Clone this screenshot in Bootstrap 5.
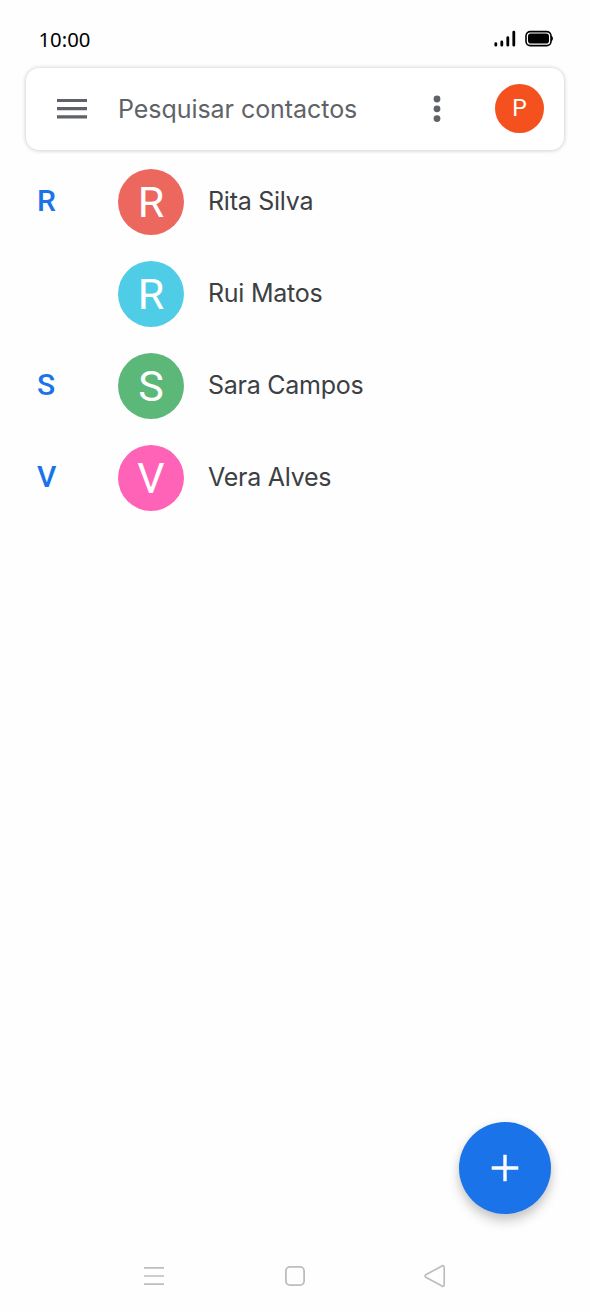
<!DOCTYPE html>
<html lang="pt">
<head>
<meta charset="utf-8">
<meta name="viewport" content="width=device-width, initial-scale=1">
<title>Contactos</title>
<link href="https://cdn.jsdelivr.net/npm/bootstrap@5.3.0/dist/css/bootstrap.min.css" rel="stylesheet">
<style>
body{background:#fefefe;font-family:Inter,Roboto,sans-serif;color:#3c4043;overflow:hidden}
.phone{height:1312px}
.status{height:68px;padding:10px 37.5px 0 38.5px;font:20.3px/24px "Noto Sans",sans-serif;color:#000}
.search-box{height:82px;margin:0 26px 6px;border-radius:13px;background:#fff;box-shadow:0 0 4px rgba(60,64,67,.24),0 1px 4px rgba(60,64,67,.08);padding:0 20px 1px 31px}
.search-box>*{flex-shrink:0}
.query{width:315px;margin-left:31px;font-size:25px;letter-spacing:-.05px;color:#5f6368;line-height:32px}
.account{width:49px;height:49px;background:#f4511e;color:#fff;font:23px/49px Roboto,sans-serif;margin-left:54px}
.contact{height:92px;padding-left:37px}
.section-key{width:81px;font-size:30px;font-weight:500;font-family:Roboto,sans-serif;color:#1a73e8;line-height:32px;padding-bottom:3px}
.avatar{width:66px;height:66px;color:#fff;font:43px/67px Roboto,sans-serif}
.person{margin-left:24px;font-size:25px;line-height:32px;padding-bottom:2px;letter-spacing:-.25px}
.fab{width:92px;height:92px;background:#1a73e8;margin:0 39px 22px 0;box-shadow:0 7px 12px rgba(0,0,0,.2),0 1px 8px rgba(0,0,0,.06)}
.system-nav{height:76px;padding:4px 144px 0 143px}
</style>
</head>
<body>
<div class="phone d-flex flex-column">
<header class="status d-flex align-items-center justify-content-between">
<span>10:00</span>
<svg width="62" height="20" viewBox="0 0 62 20" aria-hidden="true" class="mb-1"><path d="M4.8 16.6v1.6M10.8 14.9v3.3M16.8 10.6v7.6M22.8 5.1v13.1" stroke="#000" stroke-width="2.8" stroke-linecap="round"/><rect x="35" y="4.6" width="25" height="14" rx="4.3" fill="none" stroke="#000" stroke-width="1.6"/><rect x="37" y="6.6" width="21" height="10" rx="2.8"/><path d="M60 8.6q2 1 2 3t-2 3z"/></svg>
</header>
<div class="search-box d-flex align-items-center flex-shrink-0">
<svg width="30" height="22" viewBox="0 0 30 22"><path d="M0 2.5h30M0 10.7h30M0 18.9h30" stroke="#5f6368" stroke-width="3.2"/></svg>
<span class="query text-nowrap">Pesquisar contactos</span>
<svg width="8" height="28" viewBox="0 0 8 28" fill="#5f6368"><circle cx="4" cy="4" r="3.4"/><circle cx="4" cy="13.8" r="3.4"/><circle cx="4" cy="23.6" r="3.4"/></svg>
<span class="account rounded-circle text-center">P</span>
</div>
<main>
<div class="contact d-flex align-items-center"><span class="section-key">R</span><span class="avatar rounded-circle text-center" style="background:#ec685e">R</span><span class="person">Rita Silva</span></div>
<div class="contact d-flex align-items-center"><span class="section-key"></span><span class="avatar rounded-circle text-center" style="background:#50cde6">R</span><span class="person">Rui Matos</span></div>
<div class="contact d-flex align-items-center"><span class="section-key">S</span><span class="avatar rounded-circle text-center" style="background:#5cb878">S</span><span class="person">Sara Campos</span></div>
<div class="contact d-flex align-items-center"><span class="section-key">V</span><span class="avatar rounded-circle text-center" style="background:#ff63b8">V</span><span class="person">Vera Alves</span></div>
</main>
<button class="fab btn border-0 rounded-circle p-0 mt-auto align-self-end d-flex align-items-center justify-content-center flex-shrink-0" aria-label="Adicionar"><svg width="28" height="28" viewBox="0 0 28 28"><path d="M14 .7v26.6M.7 14h26.6" stroke="#fff" stroke-width="3.4"/></svg></button>
<nav class="system-nav d-flex justify-content-between align-items-start flex-shrink-0">
<svg width="22" height="76" viewBox="0 0 22 76" stroke="#bdbdbd" stroke-width="1.7"><path d="M1 27.9h20M1 36h20M1 44.1h20"/></svg>
<svg width="22" height="76" viewBox="0 0 22 76" fill="none" stroke="#bdbdbd" stroke-width="1.8"><rect x="1.9" y="26.9" width="18.2" height="18.2" rx="4"/></svg>
<svg width="22" height="76" viewBox="0 0 22 76" fill="none" stroke="#bdbdbd" stroke-width="1.7" stroke-linejoin="round"><path d="M1.8 34.8 18 25.9Q20.2 25 20.2 27.5v17Q20.2 47 18 46.1L1.8 37.2Q.2 36 1.8 34.8z"/></svg>
</nav>
</div>
<script src="https://cdn.jsdelivr.net/npm/bootstrap@5.3.0/dist/js/bootstrap.bundle.min.js"></script>
</body>
</html>
